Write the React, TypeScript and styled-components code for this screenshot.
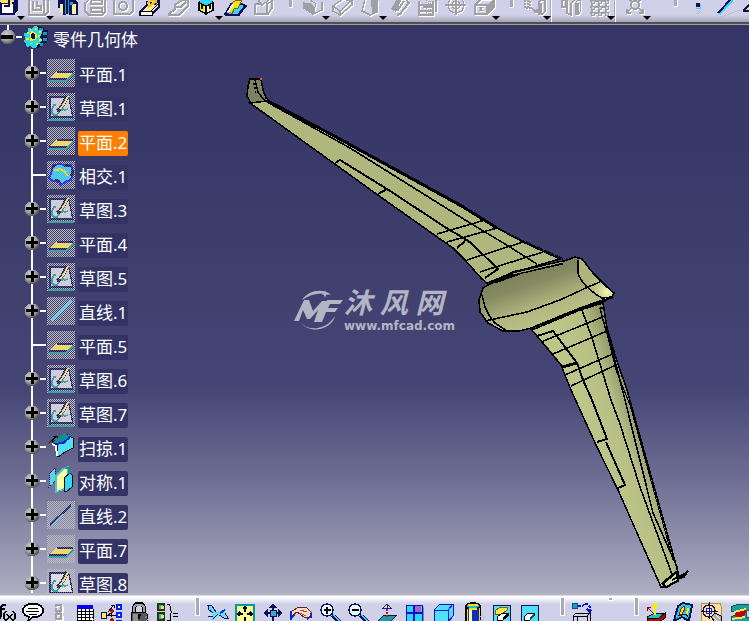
import React from "react";
import styled, { createGlobalStyle } from "styled-components";

const GlobalStyle = createGlobalStyle`
  * { box-sizing: border-box; }
  body { margin: 0; background: #333366; overflow: hidden; }
  button { font: inherit; color: inherit; }
`;

const NAVY = "#101058";
const CYAN = "#30d8f8";
const GREY = "#a0a0a4";

const Page = styled.div`
  display: grid;
  grid-template-rows: auto minmax(0, 1fr) auto;
  height: 100vh;
  font-family: "Noto Sans", "Noto Sans CJK SC", sans-serif;
  color: #fff;
`;

const TopBar = styled.header`
  display: flex;
  height: 25px;
  overflow: hidden;
  padding-bottom: 3px;
  background: linear-gradient(#d0d0e8 0 15px, #a4a4b8 22px, #505054 22px 24px, #a0a094 24px);
`;

const BottomBar = styled.footer`
  display: flex;
  height: 28px;
  overflow: hidden;
  padding-top: 10px;
  background: linear-gradient(#b4b4c4 0 2px, #ffffff 3px, #fafaff 5px, #d0d0e8 11px);
`;

const Group = styled.div<{ $start?: number }>`
  display: flex;
  flex: none;
  margin-left: ${(p) => p.$start ?? 0}px;
`;

const ToolButton = styled.button<{ $width: number }>`
  position: relative;
  display: flex;
  align-items: flex-start;
  justify-content: flex-start;
  flex: none;
  width: ${(p) => p.$width}px;
  padding: 0 0 0 2px;
  border: 0;
  background: none;
`;

const Glyph = styled.svg<{ $off?: boolean }>`
  display: block;
  flex: none;
  overflow: visible;
  shape-rendering: crispEdges;
  filter: ${(p) => (p.$off ? "drop-shadow(1px 1px 0 #fff)" : "none")};
`;

const MenuArrow = styled.i`
  position: absolute;
  left: 22px;
  top: 16px;
  border: 4px solid transparent;
  border-top-color: #000;
  border-bottom: 0;
`;

const Gap = styled.div<{ $width: number; $lead: number; $height: number }>`
  flex: none;
  width: ${(p) => p.$width}px;
  padding-left: ${(p) => p.$lead}px;
  &::before {
    content: "";
    display: block;
    width: 3px;
    height: ${(p) => p.$height}px;
    border: solid #fff;
    border-width: 0 1px 1px 0;
    background: #a8a8b8;
  }
`;

const BottomGap = styled(Gap)`
  margin-top: -5px;
  &::before { border-width: 0 1px 1px 1px; }
`;

const Divider = styled.div`
  flex: none;
  width: 7px;
  height: 22px;
  padding-left: 1px;
  &::before { content: ""; display: block; width: 1px; height: 100%; background: #fff; box-shadow: -1px 0 #a8a8b8; }
`;

const Viewport = styled.main`
  position: relative;
  overflow: hidden;
  background: linear-gradient(#343466 0%, #3d3d6c 35%, #464676 64%, #6b6b92 79%, #adadc2 100%);
`;

const Drawing = styled.svg`
  position: absolute;
  inset: 0;
  width: 100%;
  height: 100%;
`;

const Watermark = styled.div`
  position: absolute;
  left: 294px;
  top: 263px;
  display: flex;
  gap: 1px;
  color: #b4b5c4;
`;

const BrandText = styled.div`
  display: grid;
`;

const BrandName = styled.div`
  font: italic 700 28px/32px "Liberation Sans", "Noto Sans CJK SC", sans-serif;
  white-space: nowrap;
`;

const BrandUrl = styled.div`
  font: 700 12px/12px "DejaVu Sans", sans-serif;
`;

const Tree = styled.nav`
  position: relative;
  width: max-content;
`;

const RootRow = styled.div`
  display: flex;
  align-items: center;
  height: 24px;
  background: linear-gradient(#fff, #fff) 7px 0 / 2px 8px no-repeat;
`;

const RootGear = styled.span`
  margin: 0 4px 0 2px;
`;

const RootLabel = styled.a`
  padding-top: 5px;
  font-size: 17px;
  line-height: 25px;
  color: #fff;
  text-decoration: none;
`;

const Rows = styled.ul`
  margin: 0;
  padding: 10px 0 0 24px;
  list-style: none;
  background: linear-gradient(#fff, #fff) 31px 0 / 2px 100% no-repeat;
`;

const Row = styled.li`
  display: flex;
  align-items: flex-start;
  height: 34px;
`;

const NodeSlot = styled.div`
  display: flex;
  align-items: center;
  width: 23px;
  height: 28px;
`;

const Toggle = styled.button`
  flex: none;
  width: 16px;
  height: 16px;
  padding: 0;
  border: 0;
  background: none;
`;

const Dash = styled.span<{ $long?: boolean }>`
  flex: none;
  width: ${(p) => (p.$long ? 13 : 6)}px;
  height: 2px;
  margin-left: ${(p) => (p.$long ? 9 : 0)}px;
  background: #fff;
`;

const checks = "repeating-conic-gradient(#bcbcc0 0 25%, transparent 0 50%) 0 0 / 2px 2px";

const IconTile = styled.span<{ $veiled: boolean }>`
  position: relative;
  flex: none;
  background: ${(p) => (p.$veiled ? checks : "none")};
  &::after {
    content: "";
    position: absolute;
    inset: 0;
    opacity: 0.45;
    background: ${(p) => (p.$veiled ? checks : "none")};
  }
`;

const ItemLabel = styled.a<{ $active?: boolean }>`
  margin: 4px 0 0 3px;
  padding: 0 1px;
  min-width: 50px;
  height: 25px;
  border-radius: 2px;
  background: ${(p) => (p.$active ? "#ff8000" : "#333366")};
  color: #fff;
  font-size: 17px;
  line-height: 24px;
  white-space: nowrap;
  text-decoration: none;
`;

/* ---------- top toolbar glyphs ---------- */
type Art = Record<string, React.ReactNode>;

const topArt: Art = {
  pad: (
    <>
      <path d="M4 3h13v11H4z" fill="#fff" stroke={NAVY} strokeWidth="2" />
      <path d="M17 14V0h4v10z" fill={NAVY} />
      <path d="M4 0h11v5h-4V3H4z" fill="#f8e850" />
      <path d="M12 0v6H7" stroke={NAVY} strokeWidth="2" fill="none" />
    </>
  ),
  pocket: <path d="M3 0v15h16l3-3V0M3 15h15V0M7 1v9h8V6h-4V1" fill="none" stroke={GREY} strokeWidth="1.5" />,
  shaft: (
    <>
      <path d="M3-1h8v16H8V8H3z" fill={NAVY} />
      <path d="M12-1h7l4 4v12h-9z" fill={NAVY} />
      <path d="M10 0h4v14h-4z" fill="#18a8b8" />
      <path d="M11 0h2v14h-2z" fill={NAVY} />
      <path d="M17 4h4v10h-4zM5 4h3v9H5z" fill="#f8f0a0" />
      <path d="M15 2h3v3h-3z" fill="#18a8b8" />
    </>
  ),
  groove: <path d="M6 0 2 3v8l4 4h13l3-3V0M8 0h11v4H8V1m0 7h11v4H8z" fill="none" stroke={GREY} strokeWidth="1.5" />,
  hole: (
    <>
      <path d="M3 0v14h16l3-3V0" fill="none" stroke={GREY} strokeWidth="1.5" />
      <circle cx="12" cy="6" r="4" fill="none" stroke={GREY} strokeWidth="2" />
    </>
  ),
  rib: (
    <>
      <path d="M1 12 8 5V2l8 2 4-4v7l-8 8H1z" fill="#f8e8a0" stroke={NAVY} strokeWidth="1.5" />
      <path d="M1 11h12v4H1z" fill="#fff" stroke="#000" />
      <path d="m8 4 4-4h5M9 7l9-6" stroke="#f0c800" strokeWidth="2" fill="none" />
      <path d="m12 11 8-8" stroke="#000" />
    </>
  ),
  slot: <path d="M2 15h10l9-9V0h-6L8 5v4l-6 5zm6-8h6l5-5" fill="none" stroke={GREY} strokeWidth="2" />,
  multi: (
    <>
      <path d="M4 2 11-1l7 3v8l-7 4-7-4z" fill="#20c8e0" stroke="#000" />
      <path d="m4 3 7 3v8l-7-4z" fill="#f8f020" stroke="#000" strokeWidth="1.5" />
      <path d="m11 6 7-3v7l-7 4z" fill="#fff8c0" stroke="#000" strokeWidth="1.5" />
      <path d="M4 1 11-2l7 3-7 4z" fill={CYAN} />
      <path d="M7 5v4m8-4v4" stroke="#000" strokeWidth="2" />
    </>
  ),
  surface: (
    <>
      <path d="m1 14 6-10h11l4 2-7 9z" fill={CYAN} stroke={NAVY} strokeWidth="1.5" />
      <path d="m5 11 4-9 4-2h5l-4 8-4 1-2 5z" fill="#f8e010" stroke="#806000" />
      <path d="m3 12 5-8h2l-5 9z" fill="#fff" />
      <path d="M1 15h13l7-9" stroke={NAVY} strokeWidth="2" fill="none" />
    </>
  ),
  wave: <path d="M3 4v10h13l4-6V1l-5 3v10M3 4h4V0m0 2 3 3 7-5" fill="none" stroke={GREY} strokeWidth="1.5" />,
  fillet: (
    <>
      <path d="M2 2v6l9 6 9-4V2" fill="none" stroke={GREY} strokeWidth="1.5" />
      <path d="M2 3h6l5 4v7L2 8z" fill={GREY} />
      <path d="M13 7V3L6-1" stroke={GREY} fill="none" />
    </>
  ),
  chamfer: <path d="m2 6 10-7 9 2v4L9 15l-7-4zm0 0 7 5v4m0-4L20 1" fill="none" stroke={GREY} strokeWidth="1.5" />,
  draft: (
    <>
      <path d="m6-1-3 12 8 4 7-3V0" fill="none" stroke={GREY} strokeWidth="1.5" />
      <path d="m12 0 6-1v13l-5 2z" fill={GREY} />
    </>
  ),
  shell: (
    <>
      <path d="m3 9 6-10h5L8 12z" fill={GREY} />
      <path d="m9 15 3-1 9-11-3-4h-3M9 11l7-10" fill="none" stroke={GREY} strokeWidth="2" />
    </>
  ),
  thick: (
    <>
      <path d="M3 1v14h14V1M3 5h14M3 11h14" fill="none" stroke={GREY} strokeWidth="1.5" />
      <path d="M10 0v14M12 1v14m2-14v14" stroke={GREY} strokeDasharray="1 1" />
      <path d="M7 7h11M20 0v12" stroke={GREY} strokeWidth="2" />
    </>
  ),
  thread: (
    <>
      <circle cx="12" cy="5" r="8" fill="none" stroke={GREY} strokeWidth="1.5" />
      <circle cx="12" cy="5" r="4" fill="none" stroke={GREY} strokeWidth="1.5" />
      <path d="M12-1v16M1 5h21" stroke={GREY} strokeWidth="1.5" />
    </>
  ),
  remove: (
    <>
      <path d="M3 5h12v9H3zM3 5l6-6h13v8l-7 7" fill="none" stroke={GREY} strokeWidth="1.5" />
      <path d="m15 5 6-6v8l-6 7zM6 7h6L9 9l3 2H6l3-2z" fill={GREY} />
    </>
  ),
  translate: (
    <>
      <path d="M2 0v8h5V0M5 0v9" stroke={GREY} strokeWidth="2" strokeDasharray="2 1" fill="none" />
      <path d="m8 8 6 4m-3 0h3V9" stroke={GREY} strokeWidth="1.5" fill="none" />
      <path d="M15 3h4v12h-4z" fill={GREY} />
      <path d="m15 3 3-3h4v11l-3 4" fill="none" stroke={GREY} strokeWidth="1.5" />
    </>
  ),
  mirror: (
    <>
      <path d="M3 0v7h4V0zM8 0v13l4 2V4l3-4" fill="none" stroke={GREY} strokeWidth="1.5" />
      <path d="M16 3h4v12h-4z" fill={GREY} />
      <path d="m16 3 3-3h2v12l-2 3" fill="none" stroke={GREY} />
    </>
  ),
  pattern: (
    <>
      <path d="M5-1v15m7-15v15m7-15v15M3 1h18M3 7h18M3 13h18" stroke={GREY} strokeWidth="1.5" />
      <path d="M4 0h3v3H4zm7 0h3v3h-3zm7 0h3v3h-3zM4 6h3v3H4zm7 0h3v3h-3zm7 0h3v3h-3zM4 12h3v3H4zm7 0h3v3h-3zm7 0h3v3h-3z" fill="#d0d0e8" stroke={GREY} />
    </>
  ),
  scale: (
    <>
      <circle cx="12" cy="5" r="4" fill="none" stroke={GREY} strokeWidth="2" />
      <path d="m8 8-4 5m0-4v4h4m8-5 4 5m-4 0h4V9M7 0l2 2m8-2-2 2" stroke={GREY} strokeWidth="1.5" fill="none" />
    </>
  ),
  point: (
    <>
      <path d="M10 3h4v4h-4z" fill={NAVY} />
      <path d="M14 4v4h-4" stroke={CYAN} fill="none" />
      <path d="m10 14 3-3m-1 3 3-3" stroke="#b8b8c0" />
    </>
  ),
  line: (
    <>
      <path d="M6 14 19 0" stroke={CYAN} strokeWidth="3" />
      <path d="M5 13 18-1" stroke={NAVY} strokeWidth="2" />
      <path d="m8 17 20-7" stroke="#b8b8c0" strokeDasharray="2 1" />
    </>
  ),
  plane: (
    <>
      <path d="m3 11 6-6h14v6z" fill="#f8e850" />
      <path d="M3 11h20M3 11l6-6" stroke={NAVY} strokeWidth="2" />
    </>
  ),
};

/* ---------- bottom toolbar glyphs ---------- */
const shade = <path d="m18 15 4-4m-3 7 5-5m-3 5 3-3" stroke="#b8b8c2" strokeDasharray="1 1" />;

const bottomArt: Art = {
  formula: (
    <>
      <path d="M11 2H8L6 4v9l-2 3H2M4 6h6" stroke="#000" strokeWidth="2" fill="none" />
      <path d="m11 8-2 3v4l2 3m7-10 2 3v4l-2 3m-6-7 5 6m0-6-5 6" stroke="#000" strokeWidth="1.5" fill="none" />
    </>
  ),
  comment: (
    <>
      <path d="M8 1h8l4 2 2 3v3l-2 3-4 2h-4l-5 4 1-4-4-2-2-3V6l2-3z" fill="#fff" stroke="#000" strokeWidth="1.5" />
      <path d="M7 5h10M5 8h13M8 11h8" stroke="#000" />
    </>
  ),
  link: (
    <>
      <path d="M9 4V2h5v6H9V5m1 2v3m3-3v3M9 11h5v5H9z" fill="none" stroke={GREY} strokeWidth="1.5" />
      <path d="M15 3v6m0 3v5" stroke="#fff" />
    </>
  ),
  table: (
    <>
      <path d="M4 2h16v17H4z" fill="#fff" />
      <path d="M4 6v13m4-13v13m4-13v13m4-13v13m4-13v13M4 8h16M4 11h16M4 14h16M4 17h16" stroke="#000" />
      <path d="M4 2h16v4H4z" fill="#0000f0" />
      {shade}
    </>
  ),
  graph: (
    <>
      <path d="M2 9h5v6H2z" fill="#ffe860" stroke={NAVY} />
      <path d="M7 12h10M9 9l6-7m-3 0h3v3M9 12l3-2v4" stroke="#000" fill="none" />
      <path d="M18 2h4v4h-4zm0 8h4v4h-4zm0 8h4v2h-4z" fill="#fff" stroke="#0020f0" strokeWidth="1.5" />
      <path d="M13 6v4m-2-2h4m-2 7v4m-2-2h4" stroke="#c00010" strokeWidth="1.5" />
    </>
  ),
  lock: (
    <>
      <path d="M7 10V4l2-3h6l2 3v6" fill="none" stroke="#000" strokeWidth="4" />
      <path d="M7 10V4l2-2h6l2 2v6" fill="none" stroke="#a0a0a0" strokeWidth="2" />
      <path d="M4 9h14l2 2v8H4z" fill="#585858" stroke="#000" />
      <path d="M6 11h5v7H6z" fill="#909090" />
      <path d="M12 11v5m-1-4h3" stroke="#000" strokeWidth="2" />
      {shade}
    </>
  ),
  relations: (
    <>
      <path d="M3 1h6v6H3zm0 9h6v7H3z" fill="#18c0c8" stroke="#303000" strokeWidth="1.5" />
      <path d="M6 3h3v3H6zm0 9h3v3H6z" fill="#f8e850" />
      <path d="M12 1h2l1 2v4l2 2-2 2v6h-3" fill="none" stroke="#000" />
      <path d="M18 10h5m-5 3h5" stroke="#000" />
    </>
  ),
  fly: (
    <>
      <path d="m2 2 5 1 5 6 5-2 4-1-1 4 3 4h-6l-4-2-4 5H6l2-6-4-3z" fill="#60e0f8" />
      <path d="m2 2 5 1 4 6M4 3l-1 3 5 4m0 6 5-5m-10 2h5m6-1 5 3h4l-3-5" stroke={NAVY} fill="none" />
      <path d="m15 10 5-3" stroke="#1020f0" strokeWidth="2" />
    </>
  ),
  fit: (
    <>
      <path d="M3 2h18v18H3z" fill="#ffff90" stroke="#009898" strokeWidth="2" />
      <path d="M12 4v5m-2-3 2-2 2 2M12 14v4M5 11h5M7 9l-2 2 2 2m7-2h5m-2-2 2 2-2 2" stroke="#000" strokeWidth="1.5" fill="none" />
    </>
  ),
  pan: (
    <>
      <path d="M12 2v18M3 10h18" stroke={NAVY} strokeWidth="2" />
      <path d="m12 0 4 5H8zM2 10l5-4v8zm20 0-5-4v8z" fill={NAVY} />
      <path d="M9 7h6v6H9z" fill="#38a8c8" stroke={NAVY} />
    </>
  ),
  rotate: (
    <>
      <path d="m3 8 7-4h7l5 5v5h-7L8 9l-4 3H2z" fill="#ffd8c0" stroke="#602020" />
      <path d="m11 7 7 2m-7 1 6 3" stroke="#b05050" />
      <path d="M2 8v9m0-2 4-3m12 4 4-3v-3" stroke="#1020e0" strokeWidth="1.5" fill="none" />
    </>
  ),
  zoomIn: (
    <>
      <path d="m15 12 8 7" stroke={NAVY} strokeWidth="4" />
      <path d="m16 12 7 6" stroke={CYAN} strokeWidth="1.5" />
      <circle cx="10" cy="7" r="6" fill="#e8ffff" stroke={NAVY} strokeWidth="1.5" />
      <path d="M10 4v7M7 7h7" stroke="#000" strokeWidth="2" />
    </>
  ),
  zoomOut: (
    <>
      <path d="m15 12 8 7" stroke={NAVY} strokeWidth="4" />
      <path d="m16 12 7 6" stroke={CYAN} strokeWidth="1.5" />
      <circle cx="10" cy="7" r="6" fill="#e8ffff" stroke={NAVY} strokeWidth="1.5" />
      <path d="M7 7h7" stroke="#000" strokeWidth="2" />
    </>
  ),
  normal: (
    <>
      <path d="m3 18 6-6h13l-6 6z" fill="#18a0a0" stroke={NAVY} />
      <path d="M12 1v4M8 5l4-4 4 4z" stroke="#1010e0" fill="#ffe860" />
      <path d="M12 6v9" stroke="#c02000" strokeWidth="2" strokeDasharray="2 1" />
    </>
  ),
  views: (
    <>
      <path d="M6 4h15v17H6z" fill="#888890" />
      <path d="M3 2h16v17H3z" fill={CYAN} stroke="#0010d0" />
      <path d="M12 3h6v6h-6z" fill="#b060c8" />
      <path d="M11 2v17M3 10h16" stroke="#0010d0" strokeWidth="1.5" />
    </>
  ),
  cube: (
    <>
      <path d="m3 7 6-6h13v12l-5 6H3z" fill="#50e0ff" stroke="#0010e0" />
      <path d="M3 7h14v12M17 7l5-6" stroke="#0010e0" fill="none" />
    </>
  ),
  cylinder: (
    <>
      <path d="M5 4v16h14V4z" fill="#1030c0" stroke="#000" strokeWidth="1.5" />
      <path d="M8 6h3v13H8z" fill="#fff8a0" />
      <path d="M6 4v15m12-15v15" stroke="#f8e010" />
      <ellipse cx="12" cy="3" rx="7" ry="3" fill="#20b8e8" stroke="#000" strokeWidth="1.5" />
      <path d="M7 2h10M8 6h8" stroke="#f8e010" strokeWidth="1.5" />
      {shade}
    </>
  ),
  hide: (
    <>
      <path d="M4 2h17v18H4z" fill="#50e0f8" stroke={NAVY} />
      <path d="m6 8 5-4h7v3l-5 4H6z" fill="#f8e850" stroke="#806000" />
      <path d="m8 14 5-4h6v3l-5 4H8z" fill="#fff" stroke="#000" />
      <path d="m14 17 5-4v-3l-5 4z" fill="#000" />
    </>
  ),
  swap: (
    <>
      <path d="M4 2h17v18H4z" fill="#50e0f8" stroke={NAVY} />
      <path d="m7 14 4-4h6v3l-4 4H7z" fill="#fff" stroke="#000" />
      <path d="m13 17 4-4v-3l-4 4z" fill="#205060" />
    </>
  ),
  transfer: (
    <>
      <circle cx="5" cy="3" r="3" fill="#18a0b8" stroke="#105080" />
      <path d="M8 3h4l3-2h2l3 3v4m-3-2 3 3 2-3" fill="none" stroke="#0010e0" strokeWidth="1.5" strokeDasharray="3 1" />
      <path d="M3 13h14v6H3zm0 0 3-3h14l-3 3m3-3v8M7 13v6" fill="none" stroke="#000" />
    </>
  ),
  axis: (
    <>
      <path d="m4 14 8-4h10l-6 8H4z" fill="#18c0c8" stroke="#000" />
      <path d="M4 15h12l6-5v5l-6 4H4z" fill="#c00000" stroke="#000" />
      <path d="M12 12V2M9 4l3-3 3 3" stroke="#f8f000" strokeWidth="2" fill="none" />
      <path d="m10 10-6-6m0 4V4h4" stroke="#900000" fill="none" />
    </>
  ),
  analysis: (
    <>
      <path d="m3 18 4-15 5-3 9 2-3 16-7-4z" fill="#20d0d8" stroke={NAVY} strokeWidth="2" />
      <path d="m8 12 2-6 3-3 1 3-3 5z" stroke="#c00000" fill="#f8f020" />
      <path d="m16 12 1-7" stroke="#f8f020" strokeWidth="2" />
      <path d="m7 13 8-2 3 4" stroke={NAVY} fill="none" />
    </>
  ),
  target: (
    <>
      <rect x="2" y="0" width="20" height="20" rx="3" fill="#ffe0a0" stroke="#c09030" />
      <circle cx="10" cy="8" r="6" fill="none" stroke={NAVY} strokeWidth="1.5" />
      <circle cx="10" cy="8" r="3" fill="#fff" stroke="#1020e0" />
      <path d="M10-1v17M2 8h17" stroke={NAVY} />
      <path d="m12 14 4-4 6 3v5h-7z" fill="#b0b0b0" stroke="#000" />
      <path d="m14 14 4 4m-1-6 4 4" stroke="#fff" />
    </>
  ),
  section: (
    <>
      <path d="m4 4 7-3h12v5l-4 3v6l4-1v6H4v-6l4-2V9l-4-1z" fill="#18a0a0" stroke="#105050" />
      <path d="m8 8 11-2v3l-3 6H8z" fill="#c00000" />
      <path d="m7 9 12-3M5 16l13-2" stroke="#f8e850" strokeWidth="2" />
    </>
  ),
};

type Tool = { art: string; label: string; off?: boolean; menu?: boolean };

const topGroups: Tool[][] = [
  [
    { art: "pad", label: "凸台", menu: true },
    { art: "pocket", label: "凹槽", off: true, menu: true },
    { art: "shaft", label: "旋转体" },
    { art: "groove", label: "旋转槽", off: true },
    { art: "hole", label: "孔", off: true },
    { art: "rib", label: "肋" },
    { art: "slot", label: "开槽", off: true },
    { art: "multi", label: "多截面实体", menu: true },
    { art: "surface", label: "厚曲面" },
    { art: "wave", label: "缝合曲面", off: true },
  ],
  [
    { art: "fillet", label: "倒圆角", off: true, menu: true },
    { art: "chamfer", label: "倒角", off: true },
    { art: "draft", label: "拔模", off: true, menu: true },
    { art: "shell", label: "抽壳", off: true },
    { art: "thick", label: "厚度", off: true },
    { art: "thread", label: "螺纹", off: true },
    { art: "remove", label: "移除面", off: true, menu: true },
  ],
  [{ art: "translate", label: "平移", off: true, menu: true }],
  [
    { art: "mirror", label: "镜像", off: true },
    { art: "pattern", label: "阵列", off: true, menu: true },
  ],
  [{ art: "scale", label: "缩放", off: true, menu: true }],
  [
    { art: "point", label: "点" },
    { art: "line", label: "直线" },
    { art: "plane", label: "平面" },
  ],
];

const knowledgeTools: Tool[] = [
  { art: "formula", label: "公式" },
  { art: "comment", label: "注释" },
  { art: "link", label: "链接", off: true },
  { art: "table", label: "设计表" },
];
const relationTools: Tool[] = [
  { art: "graph", label: "知识" },
  { art: "lock", label: "锁定" },
  { art: "relations", label: "关系" },
];
const moveTools: Tool[] = [
  { art: "fly", label: "飞行模式" },
  { art: "fit", label: "全部适应" },
  { art: "pan", label: "平移视图" },
  { art: "rotate", label: "旋转视图" },
  { art: "zoomIn", label: "放大" },
  { art: "zoomOut", label: "缩小" },
];
const viewTools: Tool[] = [
  { art: "normal", label: "法线视图" },
  { art: "views", label: "多视图" },
  { art: "cube", label: "等轴测" },
];
const renderTools: Tool[] = [
  { art: "cylinder", label: "着色" },
  { art: "hide", label: "隐藏" },
  { art: "swap", label: "交换空间" },
];
const analysisTools: Tool[] = [
  { art: "axis", label: "拔模分析" },
  { art: "analysis", label: "曲率分析" },
  { art: "target", label: "点击分析" },
  { art: "section", label: "截面" },
];

function Tools({ items, art, width = 28, start }: { items: Tool[]; art: Art; width?: number; start?: number }) {
  return (
    <Group $start={start}>
      {items.map((t) => (
        <ToolButton key={t.art} type="button" aria-label={t.label} disabled={t.off} $width={t.menu ? width + 1 : width}>
          <Glyph $off={t.off} width="24" height="18" viewBox="0 0 24 18" fill="none">
            {art[t.art]}
          </Glyph>
          {t.menu && <MenuArrow />}
        </ToolButton>
      ))}
    </Group>
  );
}

/* ---------- tree ---------- */
type Kind = "plane" | "sketch" | "cut" | "line" | "lineDark" | "sweep" | "symmetry";

const kindArt: Record<Kind, React.ReactNode> = {
  plane: (
    <>
      <path d="M10 13h16l-6 6H3z" fill="#ffe050" />
      <path d="M10 13h16M2 20h18" stroke={NAVY} strokeWidth="2" />
      <path d="M2 22h17l7-7" stroke="#209898" strokeWidth="1.5" fill="none" />
    </>
  ),
  sketch: (
    <>
      <path d="M3 5h19l3 20H3z" fill="#fff" fillOpacity=".7" />
      <path d="M2 4h20M3 4v22M22 5l4 20M2 24h24" stroke={NAVY} strokeWidth="1.5" />
      <path d="M1 27h26" stroke="#209898" strokeWidth="2" />
      <path d="m20 3-3 7-4 6-3 2" stroke={NAVY} strokeWidth="4" fill="none" />
      <path d="m21 3-4 8-4 5" stroke="#ffe860" strokeWidth="2" fill="none" />
      <path d="M9 12H7l-2 4v4l2 2h3l2-3m2-1 2-2 2 1 3-1" stroke="#209898" strokeWidth="1.5" fill="none" />
    </>
  ),
  cut: (
    <>
      <path d="m5 9 1-5 8-1 4 2 6-1 2 8-2 7-6 2-4 3-2-3-6-1-4-3 2-4z" fill="#30c8f8" stroke="#1010f0" strokeWidth="2" />
      <path d="M7 9h3l3-1 4 2 4 5" stroke="#f8e010" strokeWidth="2" fill="none" />
      <path d="m5 6 4-2m9 0 6 1m0 10 2-6M8 19l5 1" stroke="#000" strokeWidth="2" />
    </>
  ),
  line: <path d="m4 24 20-20" stroke="#40d0f8" strokeWidth="2" />,
  lineDark: (
    <>
      <path d="m4 25 21-21" stroke="#60d0f0" strokeWidth="2" />
      <path d="m3 24 21-20" stroke={NAVY} strokeWidth="2" />
    </>
  ),
  sweep: (
    <>
      <path d="m2 10 8-7M6 3h4v4" stroke="#000" fill="none" />
      <path d="m5 9 5 3 1 12 7-5 8-4V5l-7-4-8 5z" fill="#50e0f8" stroke="#000" />
      <path d="m5 10 6-6 5-3 8 1-6 9z" fill="#109090" />
      <path d="m8 11 8-1 7-6" stroke="#1020f0" strokeWidth="2" fill="none" />
      <path d="m5 11 4 2 1 10" stroke="#fff" strokeWidth="2" fill="none" />
    </>
  ),
  symmetry: (
    <>
      <path d="M3 6 8 1v13l-6 6z" fill="#60d0e8" stroke={NAVY} strokeDasharray="1 1" />
      <path d="m9 9 7-7 5-2v15l-4 7-8 3z" fill="#ffffa0" stroke="#40c8d0" strokeWidth="1.5" />
      <path d="m17 11 6-5 2 2v12l-6 5-2-1z" fill={CYAN} stroke="#000" />
      <path d="M19 1h3v6" stroke="#109090" strokeWidth="2" fill="none" />
    </>
  ),
};

const items: { kind: Kind; text: string; leaf?: boolean; active?: boolean }[] = [
  { kind: "plane", text: "平面.1" },
  { kind: "sketch", text: "草图.1" },
  { kind: "plane", text: "平面.2", active: true },
  { kind: "cut", text: "相交.1", leaf: true },
  { kind: "sketch", text: "草图.3" },
  { kind: "plane", text: "平面.4" },
  { kind: "sketch", text: "草图.5" },
  { kind: "line", text: "直线.1" },
  { kind: "plane", text: "平面.5", leaf: true },
  { kind: "sketch", text: "草图.6" },
  { kind: "sketch", text: "草图.7" },
  { kind: "sweep", text: "扫掠.1" },
  { kind: "symmetry", text: "对称.1" },
  { kind: "lineDark", text: "直线.2" },
  { kind: "plane", text: "平面.7" },
  { kind: "sketch", text: "草图.8" },
];

function Ball({ minus }: { minus?: boolean }) {
  return (
    <Glyph width="16" height="16" viewBox="0 0 16 16">
      <circle cx="8" cy="8" r="7.5" fill="url(#ball)" />
      <path d={minus ? "M1 8h12" : "M2 7h12M8 2v11"} stroke="#000" strokeWidth={minus ? 4 : 3} />
    </Glyph>
  );
}

function KindIcon({ kind }: { kind: Kind }) {
  return (
    <IconTile $veiled={kind !== "sweep" && kind !== "symmetry"}>
      <Glyph width="28" height="28" viewBox="0 0 28 28" fill="none">
        {kindArt[kind]}
      </Glyph>
    </IconTile>
  );
}

function Gear() {
  return (
    <Glyph width="25" height="24" viewBox="0 0 27 24" fill="none">
      <path d="m12 0 8 1 2 3 4 1v4l-2 2 2 3-2 4-4 1-2 4-6 1-3-3z" fill={NAVY} />
      <path d="M16 2h5v3h-5zm4 5h5v3h-5zm0 6h5v3h-5zm-3 6h4v3h-4z" fill="#10a0a0" />
      <path d="m5 2 3 1 3-3 4 1v3l4 1v4l-2 3 3 3-3 4-3 1v3l-4 1-3-2-4 1-1-4-2-2 1-4-1-5 4-1z" fill="#28d8e8" />
      <path d="M6 4h2m4-1h2M3 8h2m11-1h2M2 14h3m11 1h3M6 19h3m4 1h2M8 6h2m-3 9h3m5-4h2" stroke="#f8f020" strokeWidth="2" />
      <ellipse cx="10" cy="11" rx="3" ry="4" fill={NAVY} stroke="#f8f020" strokeWidth="1.5" />
    </Glyph>
  );
}

/* ---------- aircraft ---------- */
function Aircraft() {
  return (
    <Drawing viewBox="0 25 749 568" preserveAspectRatio="xMinYMin slice" fill="none" aria-hidden="true">
      <defs>
        <radialGradient id="ball" cx=".4" cy=".35" r=".65">
          <stop offset="0" stopColor="#d0d0d0" />
          <stop offset=".6" stopColor="#a0a0a0" />
          <stop offset="1" stopColor="#505050" />
        </radialGradient>
        <linearGradient id="body" gradientUnits="userSpaceOnUse" x1="530" y1="268" x2="550" y2="326">
          <stop offset="0" stopColor="#7c815c" />
          <stop offset=".25" stopColor="#858a62" />
          <stop offset=".65" stopColor="#b0b67e" />
          <stop offset="1" stopColor="#bdc488" />
        </linearGradient>
        <radialGradient id="nose" gradientUnits="userSpaceOnUse" cx="607" cy="292" r="24">
          <stop offset="0" stopColor="#f4fab4" />
          <stop offset="1" stopColor="#b4ba80" stopOpacity="0" />
        </radialGradient>
        <linearGradient id="lower" gradientUnits="userSpaceOnUse" x1="590" y1="430" x2="642" y2="412">
          <stop offset="0" stopColor="#bec589" />
          <stop offset=".55" stopColor="#b8bf84" />
          <stop offset=".8" stopColor="#9a9f70" />
          <stop offset="1" stopColor="#80855c" />
        </linearGradient>
      </defs>
      <g shapeRendering="crispEdges" stroke="#000" strokeWidth="1.6">
        <path d="M250 79h11l2 11 3 8 5 4-6 2-14-1-4-7 1-10z" fill="#7d8260" />
        <path d="M250 79h11" strokeWidth="2" />
        <path d="m255 80 3 12 6 8" />
        <path d="m254 83 2 12" strokeDasharray="2 2" />
        <path d="M261 78v2" stroke="#ff6000" />
        <path d="m250 103 17-2 4 1 69 38 120 66 37 22 26 14 37 17-45 13-28 11-5-4-17-19-12-12-20-14-58-41-43-31z" fill="#b0b77e" />
        <path d="m270 102 70 37 120 66 37 23" strokeWidth="3" />
        <path d="m497 228 26 13 40 18" strokeWidth="2" strokeDasharray="3 1" />
        <path d="m267 102 83 46 120 75 30 18 37 23" />
        <path d="m335 163 5-3 47 29 61 40 14 8 9 6 27 26-13 9" strokeWidth="2" />
        <path d="m378 194 9-5M457 248l8-7" strokeWidth="2" />
        <path d="m437 234 48-14m-38 22 50-14m-30 32 56-18m-43 30 63-20" />
        <path d="m490 283 25-11 52-11" strokeWidth="3" />

        <path d="m531 329 49-19 23-7 4 25 9 30 11 32 51 182v9l-11 6h-6l-43-97-22-45-25-55-10-25-18-22z" fill="url(#lower)" />
        <path d="M600 308h3m-3 0 3 12 10 33 12 47 28 113 24 54" />
        <path d="m606 330 10 40 14 35 43 155" strokeWidth="1" />
        <path d="m582 310 10 28 19 62 9 24 20 63 33 90" />
        <path d="m537 336 16-5 12 16 12 16 6 17 9 20 15 39-10 3m9 0 19 43-7 3" strokeWidth="2" />
        <path d="m562 367 15-4" strokeWidth="3" />
        <path d="m541 342 64-26m-52 38 54-23m-42 44 50-22m-44 33 47-22" />
        <path d="m662 583 4 4 12-7-2-8-14 11" fill="#d6dd98" />
        <path d="m664 583 12-10m-4 7 12-6" />
        <path d="m677 579 11-8-4 6z" fill="#000" />

        <path d="M490 284c10-5 22-9 36-12l36-10 13-5 7 2 11 14 14 14 7 6-2 5-9 2-23 8-49 20-12 3h-16l-15-8-8-11-1-12 4-12z" fill="url(#body)" />
        <path d="M578 260v15l10 12 14 11 11-5-7-6-24-28z" fill="#aeb47c" stroke="none" />
        <path d="m588 270 19 18 6 5-2 5-8 1-15-12z" fill="url(#nose)" stroke="none" />
        <path d="m532 328 48-19 32-12-9 5-23 8-48 20z" fill="#6c704e" />
        <path d="M562 262l13-5 7 2 11 14 14 14 7 6-2 4M578 260v13c3 10 12 18 24 25l10-1" />
        <path d="m485 321 42-9 33-12 28-13 12-5M482 295l3 12c3 7 6 12 10 16l12 8" />
        <path d="m495 282 28-10 40-9" strokeWidth="3" />
        <path d="m513 274 50-12" stroke="#9da273" strokeWidth="1" />
      </g>
    </Drawing>
  );
}

function BrandMark() {
  return (
    <svg width="49" height="42" viewBox="0 0 49 42" fill="none" aria-hidden="true">
      <path d="m0 33 10-21h5l4 11 9-10h5l-8 21h-5l4-12-8 9h-3l-4-9-4 11z" fill="currentColor" />
      <path d="M33 12h16l-3 4H36l-2 4h10l-3 4h-9l-4 10h-5z" fill="currentColor" />
      <path d="M8 12C15 2 29 0 37 7 28 4 18 5 8 12Zm-1 23c7 8 25 8 34-7-3 13-24 19-34 7Z" fill="currentColor" />
      <path d="m31 2 1 3 3 1-3 1-1 3-1-3-3-1 3-1z" fill="currentColor" />
    </svg>
  );
}

export default function App() {
  return (
    <Page>
      <GlobalStyle />
      <TopBar>
        <Tools items={topGroups[0]} art={topArt} start={-5} />
        <Gap $width={22} $lead={11} $height={7} />
        <Tools items={topGroups[1]} art={topArt} />
        <Gap $width={22} $lead={11} $height={7} />
        <Tools items={topGroups[2]} art={topArt} />
        <Divider />
        <Tools items={topGroups[3]} art={topArt} />
        <Divider />
        <Tools items={topGroups[4]} art={topArt} />
        <Gap $width={34} $lead={24} $height={6} />
        <Tools items={topGroups[5]} art={topArt} width={27} />
      </TopBar>
      <Viewport>
        <Aircraft />
        <Watermark>
          <BrandMark />
          <BrandText>
            <BrandName>沐 风 网</BrandName>
            <BrandUrl>www.mfcad.com</BrandUrl>
          </BrandText>
        </Watermark>
        <Tree>
          <RootRow>
            <Toggle type="button" aria-label="折叠"><Ball minus /></Toggle>
            <Dash />
            <RootGear><Gear /></RootGear>
            <RootLabel href="#part">零件几何体</RootLabel>
          </RootRow>
          <Rows>
            {items.map((it) => (
              <Row key={it.text}>
                <NodeSlot>
                  {!it.leaf && <Toggle type="button" aria-label="展开"><Ball /></Toggle>}
                  <Dash $long={it.leaf} />
                </NodeSlot>
                <KindIcon kind={it.kind} />
                <ItemLabel href="#item" $active={it.active}>{it.text}</ItemLabel>
              </Row>
            ))}
          </Rows>
        </Tree>
      </Viewport>
      <BottomBar>
        <Tools items={knowledgeTools} art={bottomArt} width={26} start={-7} />
        <Tools items={relationTools} art={bottomArt} />
        <BottomGap $width={22} $lead={14} $height={17} />
        <Tools items={moveTools} art={bottomArt} />
        <Tools items={viewTools} art={bottomArt} start={2} />
        <Tools items={renderTools} art={bottomArt} start={2} />
        <BottomGap $width={25} $lead={17} $height={17} />
        <Tools items={[{ art: "transfer", label: "传输" }]} art={bottomArt} />
        <BottomGap $width={26} $lead={12} $height={2} />
        <BottomGap $width={19} $lead={12} $height={17} />
        <Tools items={analysisTools} art={bottomArt} />
      </BottomBar>
    </Page>
  );
}
